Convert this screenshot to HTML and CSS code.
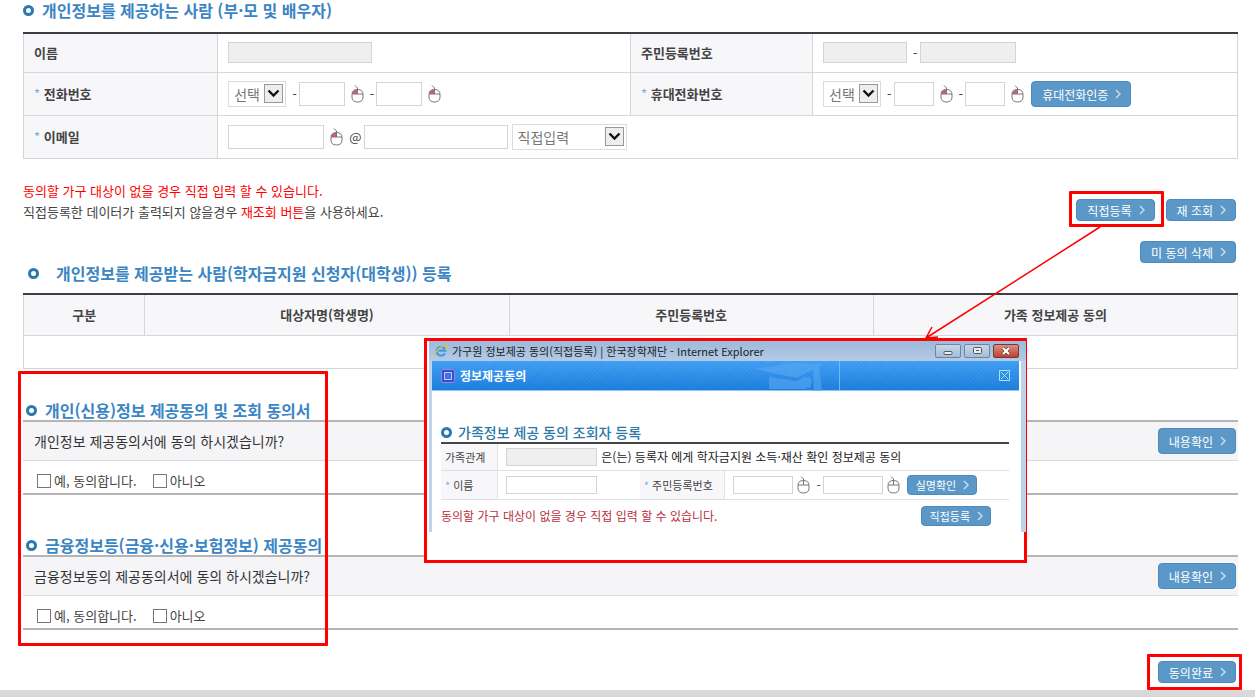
FILE: index.html
```
<!DOCTYPE html>
<html lang="ko">
<head>
    <meta charset="UTF-8">
    <meta name="viewport" content="width=device-width, initial-scale=1.0">
    <title>가구원 정보제공 동의</title>
    <link rel="stylesheet" href="styles.css">
</head>
<body>
    <!-- shared icons -->
    <svg class="defs" width="0" height="0">
        <symbol id="mouse" viewBox="0 0 13 18">
            <path class="mouse-key" d="M1 9q0-4 5.500-4.500V9z"/>
            <path d="M4 0.500l2.500 2.500v6M1 9h11" fill="none" stroke="#777"/>
            <path d="M1 9.500q0-5 5.500-5t5.500 5v2.500q0 5-5.500 5t-5.500-5z" fill="none" stroke="#777"/>
        </symbol>
        <symbol id="arrow" viewBox="0 0 19 19">
            <rect x="0.500" y="0.500" width="18" height="18" fill="#eee" stroke="#999"/>
            <path d="M4.500 6.500l5 5 5-5" fill="none" stroke="#111" stroke-width="2.400"/>
        </symbol>
        <symbol id="chevron" viewBox="0 0 6 10">
            <path d="M1 1l4 4-4 4" fill="none" stroke="#c5dcee" stroke-width="1.500"/>
        </symbol>
    </svg>

    <main class="page">
        <h2 class="title">개인정보를 제공하는 사람 (부·모 및 배우자)</h2>
        <table class="grid form">
            <colgroup>
                <col class="c16"><col class="c34"><col class="c15"><col class="c35">
            </colgroup>
            <tr>
                <th><label for="name">이름</label></th>
                <td><div class="row"><input type="text" id="name" class="w-lg" disabled></div></td>
                <th><label for="jumin1">주민등록번호</label></th>
                <td>
                    <div class="row">
                        <input type="text" id="jumin1" class="w-jumin" disabled>
                        <span class="dash">-</span>
                        <input type="text" class="w-md" aria-label="주민등록번호 뒷자리" disabled>
                    </div>
                </td>
            </tr>
            <tr>
                <th><i>*</i> <label for="tel">전화번호</label></th>
                <td>
                    <div class="row">
                        <span class="select"><select id="tel"><option>선택</option></select><svg><use href="#arrow"/></svg></span>
                        <span class="dash">-</span>
                        <input type="text" class="w-tel" aria-label="전화번호 앞자리">
                        <svg class="mouse"><use href="#mouse"/></svg>
                        <span class="dash">-</span>
                        <input type="text" class="w-tel" aria-label="전화번호 뒷자리">
                        <svg class="mouse"><use href="#mouse"/></svg>
                    </div>
                </td>
                <th><i>*</i> <label for="hp">휴대전화번호</label></th>
                <td>
                    <div class="row">
                        <span class="select"><select id="hp"><option>선택</option></select><svg><use href="#arrow"/></svg></span>
                        <span class="dash">-</span>
                        <input type="text" class="w-sm" aria-label="휴대전화번호 앞자리">
                        <svg class="mouse"><use href="#mouse"/></svg>
                        <span class="dash">-</span>
                        <input type="text" class="w-sm" aria-label="휴대전화번호 뒷자리">
                        <svg class="mouse"><use href="#mouse"/></svg>
                        <button type="button" class="btn tall after">휴대전화인증<svg><use href="#chevron"/></svg></button>
                    </div>
                </td>
            </tr>
            <tr>
                <th><i>*</i> <label for="email">이메일</label></th>
                <td colspan="3">
                    <div class="row">
                        <input type="text" id="email" class="w-md">
                        <svg class="mouse"><use href="#mouse"/></svg>
                        <span class="dash">@</span>
                        <input type="text" class="w-lg" aria-label="이메일 도메인">
                        <span class="select wide"><select aria-label="도메인 선택"><option>직접입력</option></select><svg><use href="#arrow"/></svg></span>
                    </div>
                </td>
            </tr>
        </table>

        <div class="guide">
            <p>
                <em>동의할 가구 대상이 없을 경우 직접 입력 할 수 있습니다.</em><br>
                직접등록한 데이터가 출력되지 않을경우 <em>재조회 버튼</em>을 사용하세요.
            </p>
            <div class="buttons">
                <span class="marked"><button type="button" class="btn">직접등록<svg><use href="#chevron"/></svg></button></span>
                <button type="button" class="btn">재 조회<svg><use href="#chevron"/></svg></button>
            </div>
        </div>
        <div class="delete-bar">
            <button type="button" class="btn">미 동의 삭제<svg><use href="#chevron"/></svg></button>
        </div>

        <h2 class="title receiver">개인정보를 제공받는 사람(학자금지원 신청자(대학생)) 등록</h2>
        <table class="grid list">
            <colgroup>
                <col class="c10"><col class="c30"><col class="c30"><col class="c30">
            </colgroup>
            <thead>
                <tr><th>구분</th><th>대상자명(학생명)</th><th>주민등록번호</th><th>가족 정보제공 동의</th></tr>
            </thead>
            <tbody>
                <tr><td colspan="4"></td></tr>
            </tbody>
        </table>

        <div class="consents">
            <section class="consent">
                <h2 class="title">개인(신용)정보 제공동의 및 조회 동의서</h2>
                <div class="question">
                    <p>개인정보 제공동의서에 동의 하시겠습니까?</p>
                    <button type="button" class="btn tall">내용확인<svg><use href="#chevron"/></svg></button>
                </div>
                <div class="answer">
                    <label><input type="checkbox">예, 동의합니다.</label>
                    <label><input type="checkbox">아니오</label>
                </div>
            </section>
            <section class="consent">
                <h2 class="title">금융정보등(금융·신용·보험정보) 제공동의</h2>
                <div class="question">
                    <p>금융정보동의 제공동의서에 동의 하시겠습니까?</p>
                    <button type="button" class="btn tall">내용확인<svg><use href="#chevron"/></svg></button>
                </div>
                <div class="answer">
                    <label><input type="checkbox">예, 동의합니다.</label>
                    <label><input type="checkbox">아니오</label>
                </div>
            </section>
        </div>

        <div class="finish">
            <span class="marked"><button type="button" class="btn">동의완료<svg><use href="#chevron"/></svg></button></span>
        </div>

        <svg class="pointer" viewBox="0 0 180 116">
            <path d="M177 2L3 113M9 102L3 113l12-1" fill="none" stroke="#f00" stroke-width="1.500"/>
        </svg>

        <div class="popup">
            <div class="window">
                <div class="titlebar">
                    <svg class="ie" viewBox="0 0 16 16">
                        <path d="M12.500 10.500a5 5 0 1 1 .5-3H5" fill="none" stroke="#3d9de0" stroke-width="2.600"/>
                        <path d="M2 14Q-1 12 5 6T15 2q1 2-2 5" fill="none" stroke="#e9bd3a" stroke-width="1.300"/>
                    </svg>
                    <span>가구원 정보제공 동의(직접등록) | 한국장학재단 - Internet Explorer</span>
                    <div class="controls">
                        <button type="button" aria-label="최소화"><svg viewBox="0 0 24 12"><rect x="8" y="6.500" width="8" height="3" rx="1" fill="#eee" stroke="#555"/></svg></button>
                        <button type="button" aria-label="최대화"><svg viewBox="0 0 24 12"><rect x="8.500" y="2.500" width="8" height="6" rx="1" fill="#eee" stroke="#555"/><path d="M11 5.500h3" stroke="#555"/></svg></button>
                        <button type="button" class="close" aria-label="닫기"><svg viewBox="0 0 24 12"><path d="M9 3l6 6M15 3l-6 6" stroke="#543" stroke-width="3.500"/><path d="M9 3l6 6M15 3l-6 6" stroke="#fff" stroke-width="2.200"/></svg></button>
                    </div>
                </div>
                <div class="window-body">
                    <div class="banner">
                        <svg class="square" viewBox="0 0 14 14">
                            <rect x="0.500" y="0.500" width="13" height="13" rx="2" fill="#4545c8" stroke="#8a8cf0"/>
                            <rect x="3.500" y="3.500" width="7" height="7" fill="#3478dc" stroke="#b9c8ff"/>
                        </svg>
                        <strong>정보제공동의</strong>
                        <svg class="cap" viewBox="0 0 90 30">
                            <path d="M0 8L40 2l29 1-26 14zM15 16l27 4 10-5v13H15zM59 7l6-2 3 25h-8zM50 18q6-5 8 2l-2 7-6-1z" fill="#58a8f2" opacity="0.600"/>
                            <path d="M85.500 0v30" stroke="#6cbcf8"/>
                        </svg>
                        <button type="button" class="banner-close" aria-label="창 닫기"><svg viewBox="0 0 11 11"><path d="M0.500 0.500h10v10h-10zM2 2l7 7M9 2l-7 7" fill="none" stroke="#a9e4f5"/></svg></button>
                    </div>
                    <div class="popup-form">
                        <h3 class="title">가족정보 제공 동의 조회자 등록</h3>
                        <table>
                            <colgroup>
                                <col class="c10"><col class="c25"><col class="c15"><col class="c50">
                            </colgroup>
                            <tr>
                                <th><label for="relation">가족관계</label></th>
                                <td colspan="3">
                                    <div class="row"><input type="text" id="relation" class="w-pop" disabled><span class="desc">은(는) 등록자 에게 학자금지원 소득·재산 확인 정보제공 동의</span></div>
                                </td>
                            </tr>
                            <tr>
                                <th><i>*</i> <label for="popName">이름</label></th>
                                <td><div class="row"><input type="text" id="popName" class="w-pop"></div></td>
                                <th><i>*</i> <label for="popJumin">주민등록번호</label></th>
                                <td>
                                    <div class="row">
                                        <input type="text" id="popJumin" class="w-half">
                                        <svg class="mouse plain"><use href="#mouse"/></svg>
                                        <span class="dash">-</span>
                                        <input type="text" class="w-half" aria-label="주민등록번호 뒷자리">
                                        <svg class="mouse plain"><use href="#mouse"/></svg>
                                        <button type="button" class="btn small after">실명확인<svg><use href="#chevron"/></svg></button>
                                    </div>
                                </td>
                            </tr>
                        </table>
                        <div class="popup-foot">
                            <p>동의할 가구 대상이 없을 경우 직접 입력 할 수 있습니다.</p>
                            <button type="button" class="btn small">직접등록<svg><use href="#chevron"/></svg></button>
                        </div>
                    </div>
                </div>
            </div>
        </div>
    </main>
    <footer></footer>
</body>
</html>
```
FILE: styles.css
```
*, *::before, *::after {
    box-sizing: border-box;
}
body {
    margin: 0;
    font-family: "Noto Sans CJK KR", sans-serif;
    font-size: 13px;
    line-height: 20px;
    color: #444;
    background: #fff;
}
button, input, select {
    font-family: inherit;
}
h2, h3, p {
    margin: 0;
}
.defs {
    position: absolute;
}
.page {
    position: relative;
    padding: 0 17px 7px 23px;
}

/* headings */
.title {
    display: flex;
    align-items: center;
    gap: 8px;
    font-size: 16px;
    line-height: 20px;
    font-weight: 700;
    color: #3a85c4;
}
.title::before {
    content: "";
    width: 11px;
    height: 11px;
    border: 3px solid #2a78b0;
    border-radius: 50%;
}
.title.receiver {
    gap: 17px;
    padding-left: 5px;
    margin-bottom: 10px;
}

/* tables */
table {
    width: 100%;
    border-collapse: collapse;
    table-layout: fixed;
}
.c10 { width: 10%; }
.c15 { width: 15%; }
.c16 { width: 16%; }
.c25 { width: 25%; }
.c30 { width: 30%; }
.c34 { width: 34%; }
.c35 { width: 35%; }
.c50 { width: 50%; }
.grid {
    border-top: 2px solid #3c3d47;
}
.grid th, .grid td {
    border: 1px solid #d6d6d9;
    border-top-width: 0;
    padding: 8px 10px;
}
.grid th {
    background: #f7f7fa;
    font-weight: 700;
    color: #444;
}
.form {
    margin-top: 12px;
}
.form th {
    text-align: left;
}
.form tr:first-child td {
    padding: 8px 10px 9px;
}
th i {
    font-style: normal;
    font-weight: 400;
    color: #6fb0e6;
}
.list th {
    padding: 10px;
}
.list td {
    height: 33px;
}

/* form controls */
.row {
    display: flex;
    align-items: center;
}
input[type="text"] {
    height: 24px;
    border: 1px solid #d4d4d4;
    background: #fff;
    padding: 0 4px;
}
input[type="text"]:disabled {
    height: 21px;
    background: #efefef;
}
.w-lg { width: 144px; }
.w-md { width: 96px; }
.w-jumin { width: 84px; }
.w-tel { width: 46px; }
.w-sm { width: 40px; }
.w-pop { width: 91px; }
.w-half { width: 60px; }
.dash {
    padding: 0 2px 0 6px;
}
.mouse {
    width: 13px;
    height: 18px;
    margin-left: 6px;
    fill: #d9529b;
}
.mouse.plain {
    fill: none;
    margin-left: 4px;
}
.select {
    position: relative;
    width: 58px;
}
.select.wide {
    width: 115px;
    margin-left: 4px;
}
.select select {
    display: block;
    appearance: none;
    width: 100%;
    height: 26px;
    padding: 0 5px;
    border: 1px solid #dcdcdc;
    border-radius: 0;
    background: #fff;
    font-size: 14px;
    color: #777;
}
.select svg {
    position: absolute;
    top: 3px;
    right: 3px;
    width: 19px;
    height: 19px;
    pointer-events: none;
}
.btn {
    display: flex;
    align-items: center;
    gap: 7px;
    height: 22px;
    padding: 0 9px 0 10px;
    border: 1px solid #4b8bbd;
    border-radius: 4px;
    background: #5b98c7;
    color: #fff;
    font-size: 12px;
    cursor: pointer;
}
.btn svg {
    width: 6px;
    height: 10px;
}
.btn.tall {
    height: 26px;
}
.btn.small {
    height: 20px;
    padding: 0 7px 0 8px;
    font-size: 11px;
}
.btn.after {
    margin-left: 7px;
}

/* guide text and action buttons */
.guide {
    display: flex;
    justify-content: space-between;
    align-items: center;
    margin-top: 21px;
    padding-right: 2px;
}
.guide p {
    line-height: 21px;
}
.guide em {
    font-style: normal;
    color: #f00;
}
.buttons {
    display: flex;
    gap: 11px;
    padding-top: 18px;
}
.delete-bar {
    display: flex;
    justify-content: flex-end;
    padding: 19px 2px 0 0;
}

/* red highlight boxes */
.marked {
    position: relative;
}
.marked::after {
    content: "";
    position: absolute;
    inset: -8px -9px -6px -7px;
    border: 3px solid #f00;
    border-radius: 1px;
    pointer-events: none;
}
.finish .marked::after {
    inset: -7px -6px -7px -11px;
}

/* consent sections */
.consents {
    position: relative;
    padding-top: 31px;
}
.consents::after {
    content: "";
    position: absolute;
    top: 2px;
    left: -5px;
    width: 310px;
    bottom: -16px;
    border: 3px solid #f00;
    border-radius: 1px;
    pointer-events: none;
}
.consent + .consent {
    margin-top: 40px;
}
.consent .title {
    padding-left: 3px;
}
.question {
    display: flex;
    justify-content: space-between;
    align-items: center;
    padding: 6px 2px 6px 11px;
    border-top: 2px solid #b5b5b5;
    border-bottom: 1px solid #dcdcdc;
    background: #f5f5f8;
    font-size: 14px;
    color: #333;
}
.answer {
    display: flex;
    gap: 16px;
    padding: 10px 14px 2px;
    border-bottom: 2px solid #b5b5b5;
}
.answer label {
    display: flex;
    align-items: center;
    gap: 3px;
}
.answer input {
    appearance: none;
    width: 14px;
    height: 14px;
    margin: 0;
    border: 1px solid #777;
    background: #fff;
}
.answer input:checked {
    background: #5b98c7;
}
.finish {
    display: flex;
    justify-content: flex-end;
    padding: 31px 2px 0 0;
}
footer {
    height: 7px;
    background: #d9d9d9;
}

/* popup window, lies over the list */
.pointer {
    position: absolute;
    top: 225px;
    right: 152px;
    width: 180px;
    height: 116px;
    z-index: 2;
    pointer-events: none;
}
.popup {
    position: absolute;
    top: 338px;
    right: 228px;
    width: 603px;
    border: 3px solid #f00;
    background: #fff;
    padding: 0 0 28px 2px;
}
.window {
    margin-right: -2px;
    padding: 0 5px 0 3px;
    background: #bdd3ea;
}
.titlebar {
    display: flex;
    align-items: center;
    gap: 4px;
    margin: 0 -5px 0 -3px;
    padding: 0 7px 0 5px;
    background: linear-gradient(#9db9dc, #b4cbe6);
    font-size: 11px;
    color: #222;
}
.ie {
    width: 14px;
    height: 14px;
}
.controls {
    display: flex;
    gap: 3px;
    margin-left: auto;
}
.controls button {
    width: 26px;
    height: 14px;
    padding: 0;
    border: 1px solid #6c85a3;
    border-radius: 2px;
    background: linear-gradient(#c5d7ea, #a3bdd9);
}
.controls svg {
    display: block;
    width: 24px;
    height: 12px;
}
.controls .close {
    border-color: #6b3a3a;
    background: linear-gradient(#dc8e80, #c2402c);
}
.window-body {
    background: #fff;
}
.banner {
    display: flex;
    align-items: center;
    gap: 5px;
    height: 30px;
    margin-right: 2px;
    padding: 0 9px;
    border-bottom: 1px solid #8cc8f5;
    background:
        repeating-linear-gradient(135deg, rgba(0, 60, 140, 0.08) 0 1px, transparent 1px 3px),
        linear-gradient(#43a2f6, #1f80de);
    color: #fff;
    font-size: 12px;
}
.banner strong {
    font-weight: 700;
}
.square {
    width: 14px;
    height: 14px;
}
.cap {
    width: 90px;
    height: 30px;
    margin-left: auto;
}
.banner-close {
    margin-left: 150px;
    padding: 0;
    border: 0;
    background: none;
}
.banner-close svg {
    display: block;
    width: 11px;
    height: 11px;
}
.popup-form {
    padding: 31px 12px 6px 9px;
    font-size: 12px;
}
.popup-form .title {
    gap: 6px;
    font-size: 14px;
    font-weight: 500;
    color: #2a78a8;
}
.popup-form table {
    border-top: 2px solid #444;
}
.popup-form th, .popup-form td {
    padding: 4px 8px;
    border-bottom: 1px solid #e0e0e3;
}
.popup-form th {
    padding: 2px 4px;
    border-right: 1px solid #e3e3e6;
    background: #f7f7fa;
    font-size: 11px;
    font-weight: 400;
    text-align: left;
    white-space: nowrap;
}
.popup-form input[type="text"] {
    height: 18px;
}
.desc {
    padding-left: 4px;
    line-height: 16px;
    color: #222;
    white-space: nowrap;
}
.popup-foot {
    display: flex;
    justify-content: space-between;
    align-items: center;
    padding: 6px 18px 0 0;
    color: #b8303c;
}
```
